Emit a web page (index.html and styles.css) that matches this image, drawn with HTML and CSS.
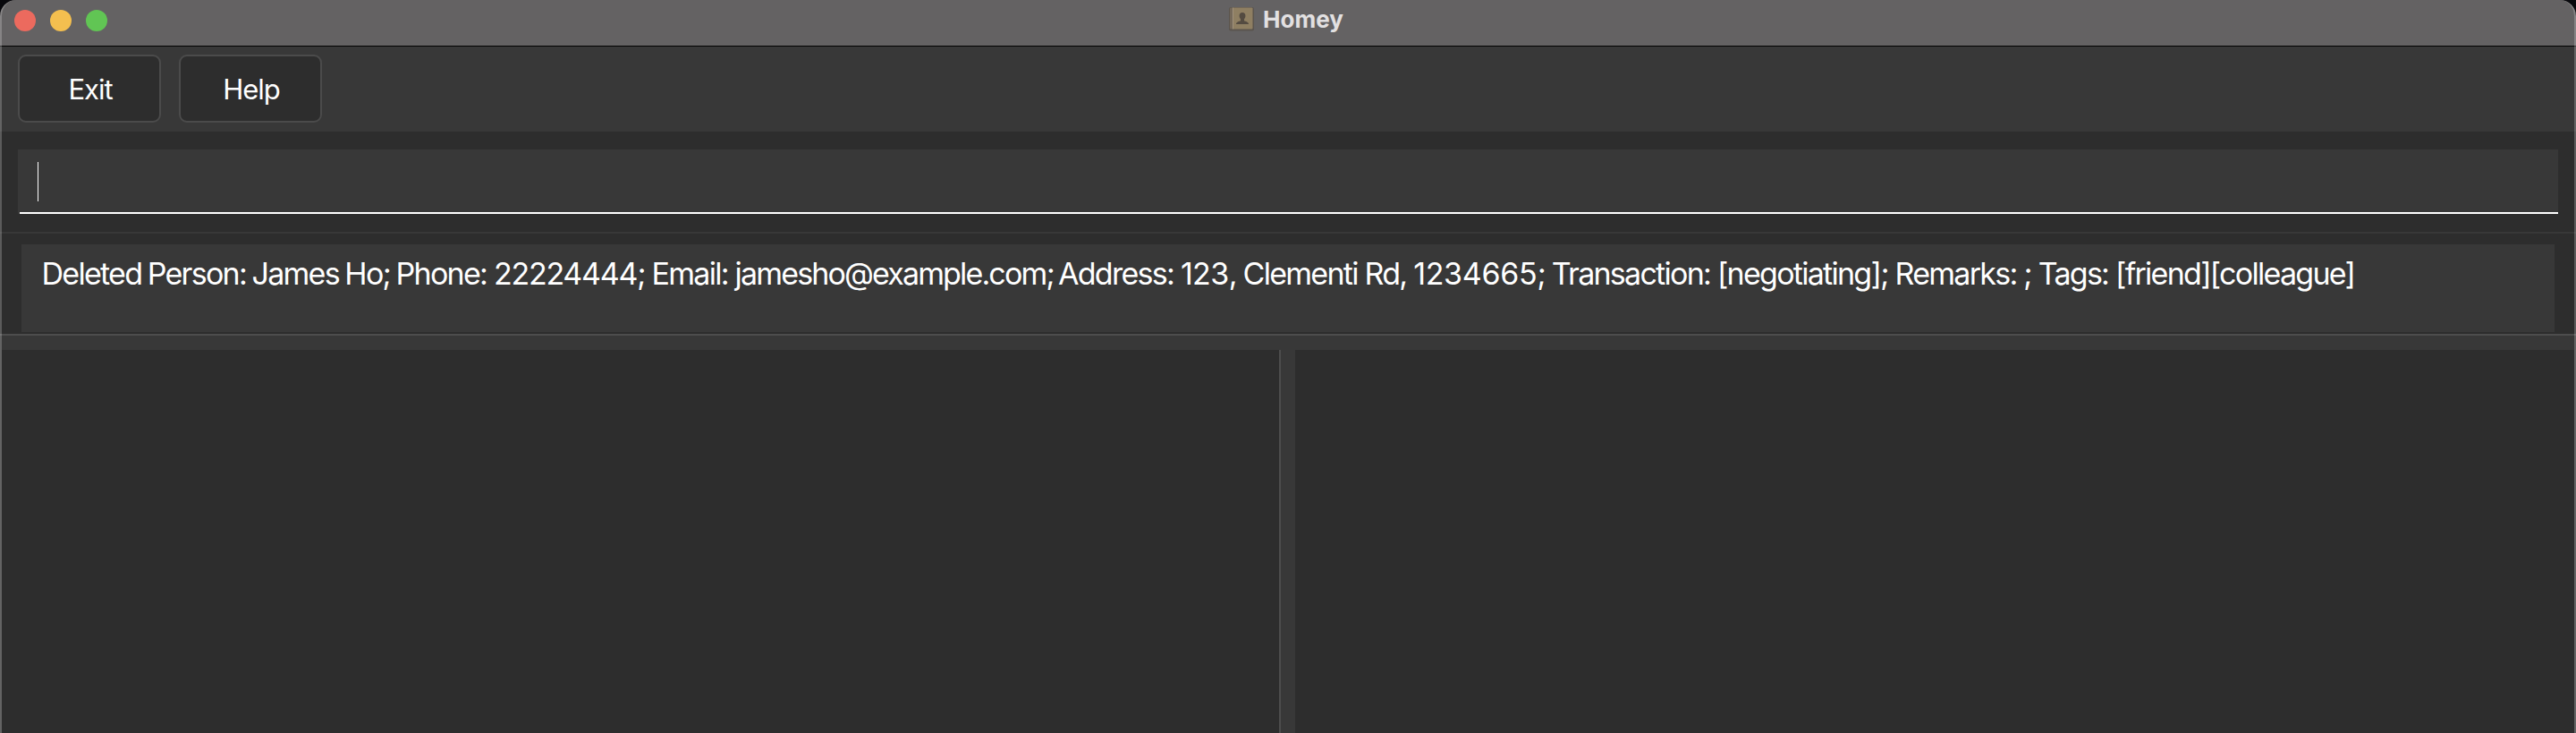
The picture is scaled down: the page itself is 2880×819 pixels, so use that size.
FILE: index.html
```html
<!DOCTYPE html>
<html lang="en">
<head>
<meta charset="utf-8">
<title>Homey</title>
<link rel="stylesheet" href="styles.css">
</head>
<body>
<div class="window">
  <header class="titlebar">
    <div class="lights"><i class="light close"></i><i class="light minimize"></i><i class="light zoom"></i></div>
    <div class="title">
      <svg class="app-icon" width="30" height="28" viewBox="0 0 30 28">
        <rect x="1" y="1" width="28" height="26.500" rx="2" fill="#5a544e"/>
        <rect x="2" y="1.500" width="4" height="24" rx="1" fill="#75695a"/>
        <rect x="5" y="1.500" width="22.500" height="24" rx="1" fill="#8f7f62"/>
        <path d="M5.500 1.500v24" stroke="#a0927c" stroke-width="1"/>
        <path d="M16 7c2.500 0 3.600 1.800 3.400 4-.1 1.700-.9 2.700-1.400 3.500v1.800c1.600.8 5 1.200 5 3.700H9c0-2.500 3.400-2.900 5-3.700v-1.800c-.5-.8-1.300-1.800-1.400-3.500C12.400 8.800 13.500 7 16 7z" fill="#544b41"/>
      </svg>
      <span class="title-text">Homey</span>
    </div>
  </header>
  <nav class="menu">
    <button class="menu-button">Exit</button>
    <button class="menu-button">Help</button>
  </nav>
  <section class="command"><div class="command-field"><i class="caret"></i></div></section>
  <section class="result"><div class="result-box"><span class="result-text"><span class="person">Deleted Person: James Ho; </span>Phone: <span class="digits">22224444</span>; Email: <span class="email">jamesho@example.com; </span>Address: <span class="block">123</span>, Clementi Rd, <span class="postal">1234665</span>; Transaction: [negotiating]; Remarks: ; Tags: [friend][colleague]</span></div></section>
  <main class="panes"><div class="pane pane-list"></div><div class="divider"></div><div class="pane"></div></main>
</div>
</body>
</html>
```

FILE: styles.css
```css
* { box-sizing: border-box; }
body { margin: 0; background: #08080c; font-family: Inter, "Liberation Sans", sans-serif; color: #fff; }
.window {
  position: relative;
  width: 2880px;
  height: 819px;
  display: flex;
  flex-direction: column;
  overflow: hidden;
  border-radius: 18px 18px 0 0;
  background: #2d2d2d;
}
/* Window edge highlight drawn over the content */
.window::after {
  content: "";
  position: absolute;
  inset: 0;
  border: solid rgba(255, 255, 255, .22);
  border-width: 0 2px;
  border-radius: 18px 18px 0 0;
  pointer-events: none;
}
.titlebar {
  height: 52px;
  flex: none;
  display: grid;
  grid-template-columns: 1fr auto 1fr;
  background: #646263;
  border-bottom: 1px solid #000;
}
.lights { display: flex; gap: 16px; padding: 11px 0 0 16px; }
.light { width: 24px; height: 24px; border-radius: 50%; }
.close { background: #ec6a5e; }
.minimize { background: #f4bf4f; }
.zoom { background: #61c554; }
.title { display: flex; align-items: flex-start; padding-right: 5px; }
.app-icon { margin: 7px 9px 0 0; }
.title-text { font-size: 26px; line-height: 32px; font-weight: 700; color: #e2e0e1; margin-top: 6px; }
.menu {
  height: 95px;
  flex: none;
  display: flex;
  gap: 20px;
  padding: 9px 20px;
  background: #383838;
}
.menu-button {
  width: 160px;
  height: 76px;
  padding: 2px 0 0 2px;
  border: 2px solid #4b4b4b;
  border-radius: 9px;
  background: #2d2d2d;
  color: #fff;
  font: 400 31px/70px Inter, "Liberation Sans", sans-serif;
  letter-spacing: -1px;
}
.command { height: 114px; flex: none; padding: 20px 20px 0; border-bottom: 2px solid #383838; }
.command-field {
  height: 72px;
  padding: 14px 22px;
  background: linear-gradient(#fff, #fff) 2px 100% / 100% 2px no-repeat #383838;
}
.caret { display: block; width: 1px; height: 44px; background: #fff; }
.result { height: 112px; flex: none; padding: 12px 24px 2px; }
.result-box { height: 98px; padding: 12px 22.5px; background: #383838; }
.result-text { display: inline-block; font-size: 34px; line-height: 42px; letter-spacing: -1.73px; white-space: nowrap; }
.person { word-spacing: -1.35px; }
.digits { letter-spacing: -1.25px; }
.email { letter-spacing: -1.85px; word-spacing: -2.5px; }
.block { letter-spacing: -.6px; }
.postal { letter-spacing: -.3px; }
.panes {
  flex: 1;
  display: flex;
  border-top: 2px solid #4d4d4d;
  padding: 16px 2px 0;
  background: #383838;
}
.pane { flex: 1; background: #2d2d2d; }
.pane-list { flex: 0 0 1428px; }
.divider { width: 18px; border-left: 2px solid #4d4d4d; }
```
